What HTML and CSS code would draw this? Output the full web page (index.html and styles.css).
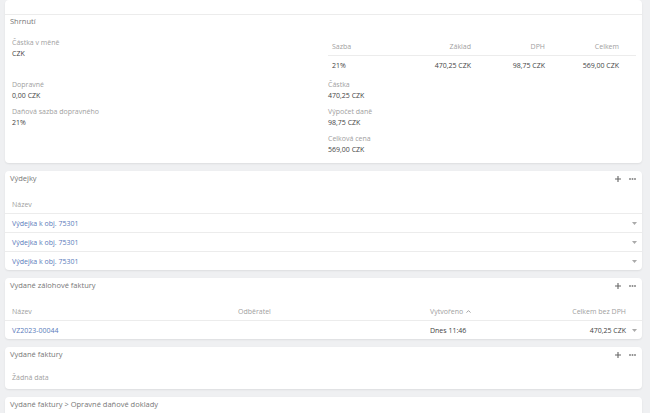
FILE: index.html
```html
<!DOCTYPE html>
<html>
	<head>
		<meta charset="utf-8">
		<title>Doklad</title>
		<link rel="stylesheet" href="styles.css">
	</head>
	<body>
		<div class="page">
			<!-- Shrnutí -->
			<section class="card">
				<div class="card-top"></div>
				<div class="card-head tight">
					<span class="card-title">Shrnutí</span>
				</div>
				<div class="summary">
					<div class="field">
						<div class="label">Částka v měně</div>
						<div class="value">CZK</div>
					</div>
					<table class="vat-table">
						<colgroup>
							<col style="width: 86px">
							<col style="width: 74px">
							<col style="width: 74px">
							<col style="width: 74px">
						</colgroup>
						<thead>
							<tr>
								<th>Sazba</th>
								<th class="num">Základ</th>
								<th class="num">DPH</th>
								<th class="num">Celkem</th>
							</tr>
						</thead>
						<tbody>
							<tr>
								<td>21%</td>
								<td class="num">470,25 CZK</td>
								<td class="num">98,75 CZK</td>
								<td class="num">569,00 CZK</td>
							</tr>
						</tbody>
					</table>
					<div class="field">
						<div class="label">Dopravné</div>
						<div class="value">0,00 CZK</div>
					</div>
					<div class="field">
						<div class="label">Částka</div>
						<div class="value">470,25 CZK</div>
					</div>
					<div class="field">
						<div class="label">Daňová sazba dopravného</div>
						<div class="value">21%</div>
					</div>
					<div class="field">
						<div class="label">Výpočet daně</div>
						<div class="value">98,75 CZK</div>
					</div>
					<div></div>
					<div class="field">
						<div class="label">Celková cena</div>
						<div class="value">569,00 CZK</div>
					</div>
				</div>
			</section>

			<!-- Výdejky -->
			<section class="card">
				<div class="card-head">
					<span class="card-title">Výdejky</span>
					<div class="head-actions">
						<svg class="ico-plus" width="6" height="6" viewBox="0 0 6 6"><path d="M3 0v6M0 3h6"/></svg>
						<svg class="ico-more" width="7" height="2" viewBox="0 0 7 2"><circle cx="1" cy="1" r="1"/><circle cx="3.5" cy="1" r="1"/><circle cx="6" cy="1" r="1"/></svg>
					</div>
				</div>
				<table class="list">
					<colgroup>
						<col>
						<col style="width: 16px">
					</colgroup>
					<thead>
						<tr><th>Název</th><th></th></tr>
					</thead>
					<tbody>
						<tr>
							<td><a href="#">Výdejka k obj. 75301</a></td>
							<td class="act"><svg class="caret" width="5" height="3" viewBox="0 0 5 3"><path d="M0 0h5L2.5 3z"/></svg></td>
						</tr>
						<tr>
							<td><a href="#">Výdejka k obj. 75301</a></td>
							<td class="act"><svg class="caret" width="5" height="3" viewBox="0 0 5 3"><path d="M0 0h5L2.5 3z"/></svg></td>
						</tr>
						<tr>
							<td><a href="#">Výdejka k obj. 75301</a></td>
							<td class="act"><svg class="caret" width="5" height="3" viewBox="0 0 5 3"><path d="M0 0h5L2.5 3z"/></svg></td>
						</tr>
					</tbody>
				</table>
			</section>

			<!-- Vydané zálohové faktury -->
			<section class="card">
				<div class="card-head">
					<span class="card-title">Vydané zálohové faktury</span>
					<div class="head-actions">
						<svg class="ico-plus" width="6" height="6" viewBox="0 0 6 6"><path d="M3 0v6M0 3h6"/></svg>
						<svg class="ico-more" width="7" height="2" viewBox="0 0 7 2"><circle cx="1" cy="1" r="1"/><circle cx="3.5" cy="1" r="1"/><circle cx="6" cy="1" r="1"/></svg>
					</div>
				</div>
				<table class="list">
					<colgroup>
						<col style="width: 226px">
						<col style="width: 192px">
						<col style="width: 120px">
						<col>
						<col style="width: 16px">
					</colgroup>
					<thead>
						<tr>
							<th>Název</th>
							<th>Odběratel</th>
							<th>Vytvořeno <svg class="sort" width="5" height="3" viewBox="0 0 5 3"><path d="M0.5 2.6L2.5 0.6L4.5 2.6"/></svg></th>
							<th class="num">Celkem bez DPH</th>
							<th></th>
						</tr>
					</thead>
					<tbody>
						<tr>
							<td><a href="#">VZ2023-00044</a></td>
							<td></td>
							<td>Dnes 11:46</td>
							<td class="num">470,25 CZK</td>
							<td class="act"><svg class="caret" width="5" height="3" viewBox="0 0 5 3"><path d="M0 0h5L2.5 3z"/></svg></td>
						</tr>
					</tbody>
				</table>
			</section>

			<!-- Vydané faktury -->
			<section class="card">
				<div class="card-head">
					<span class="card-title">Vydané faktury</span>
					<div class="head-actions">
						<svg class="ico-plus" width="6" height="6" viewBox="0 0 6 6"><path d="M3 0v6M0 3h6"/></svg>
						<svg class="ico-more" width="7" height="2" viewBox="0 0 7 2"><circle cx="1" cy="1" r="1"/><circle cx="3.5" cy="1" r="1"/><circle cx="6" cy="1" r="1"/></svg>
					</div>
				</div>
				<div class="empty">Žádná data</div>
			</section>

			<!-- Opravné daňové doklady -->
			<section class="card">
				<div class="card-head">
					<span class="card-title">Vydané faktury &gt; Opravné daňové doklady</span>
				</div>
			</section>
		</div>
	</body>
</html>
```

FILE: styles.css
```css
body {
	margin: 0;
	background: #eff0f2;
	font-family: "Open Sans", "Noto Sans", sans-serif;
	font-size: 7px;
	line-height: 11px;
	color: #444;
}

.page {
	display: flex;
	flex-direction: column;
	gap: 8px;
	padding: 0 8px 0 5px;
}

.card {
	background: #fff;
	border-radius: 4px;
	box-shadow: 0 1px 2px rgba(0, 0, 0, 0.08);
}

.card-top {
	height: 14px;
	border-bottom: 1px solid #ececec;
}

.card-head {
	display: flex;
	justify-content: space-between;
	height: 24px;
	padding: 2px 6px 0 5px;
	box-sizing: border-box;
}

.card-head.tight {
	height: 22px;
	padding-top: 1px;
}

.card-title {
	font-size: 7.5px;
	color: #777;
}

.head-actions {
	display: flex;
	align-items: center;
	gap: 8px;
	height: 11px;
}

.ico-plus {
	stroke: #666;
	stroke-width: 1.1;
}

.ico-more {
	fill: #888;
}

/* shrnutí */
.summary {
	display: grid;
	grid-template-columns: 1fr 1fr;
	column-gap: 8px;
	row-gap: 5px;
	padding: 0 6px 8px 7px;
}

.field .label {
	color: #a0a0a0;
}

.field .value {
	color: #444;
}

.vat-table {
	width: 100%;
	border-collapse: separate;
	border-spacing: 0;
	table-layout: fixed;
}

.vat-table th {
	height: 18px;
	padding: 0 0 0 4px;
	font-weight: normal;
	text-align: left;
	color: #a0a0a0;
	border-bottom: 1px solid #ececec;
}

.vat-table td {
	height: 18px;
	padding: 0 0 0 4px;
	color: #444;
}

.vat-table .num {
	text-align: right;
	padding: 0 17px 0 0;
}

/* seznamy */
.list {
	width: 100%;
	border-collapse: separate;
	border-spacing: 0;
	table-layout: fixed;
}

.list th {
	height: 18px;
	padding: 0 0 0 7px;
	font-weight: normal;
	text-align: left;
	color: #a0a0a0;
	border-bottom: 1px solid #ececec;
	white-space: nowrap;
}

.list td {
	height: 18px;
	padding: 0 0 0 7px;
	color: #444;
	white-space: nowrap;
}

.list tbody tr + tr td {
	border-top: 1px solid #ececec;
}

.list .num {
	text-align: right;
	padding: 0;
}

.list .act {
	padding: 0;
	text-align: center;
}

.list a {
	color: #5a7bbb;
	text-decoration: none;
}

.caret {
	fill: #aaa;
	vertical-align: middle;
}

.sort {
	fill: none;
	stroke: #999;
	stroke-width: 0.9;
	vertical-align: middle;
	margin-left: 1px;
}

.empty {
	padding: 1px 7px 6px;
	color: #a0a0a0;
}
```
